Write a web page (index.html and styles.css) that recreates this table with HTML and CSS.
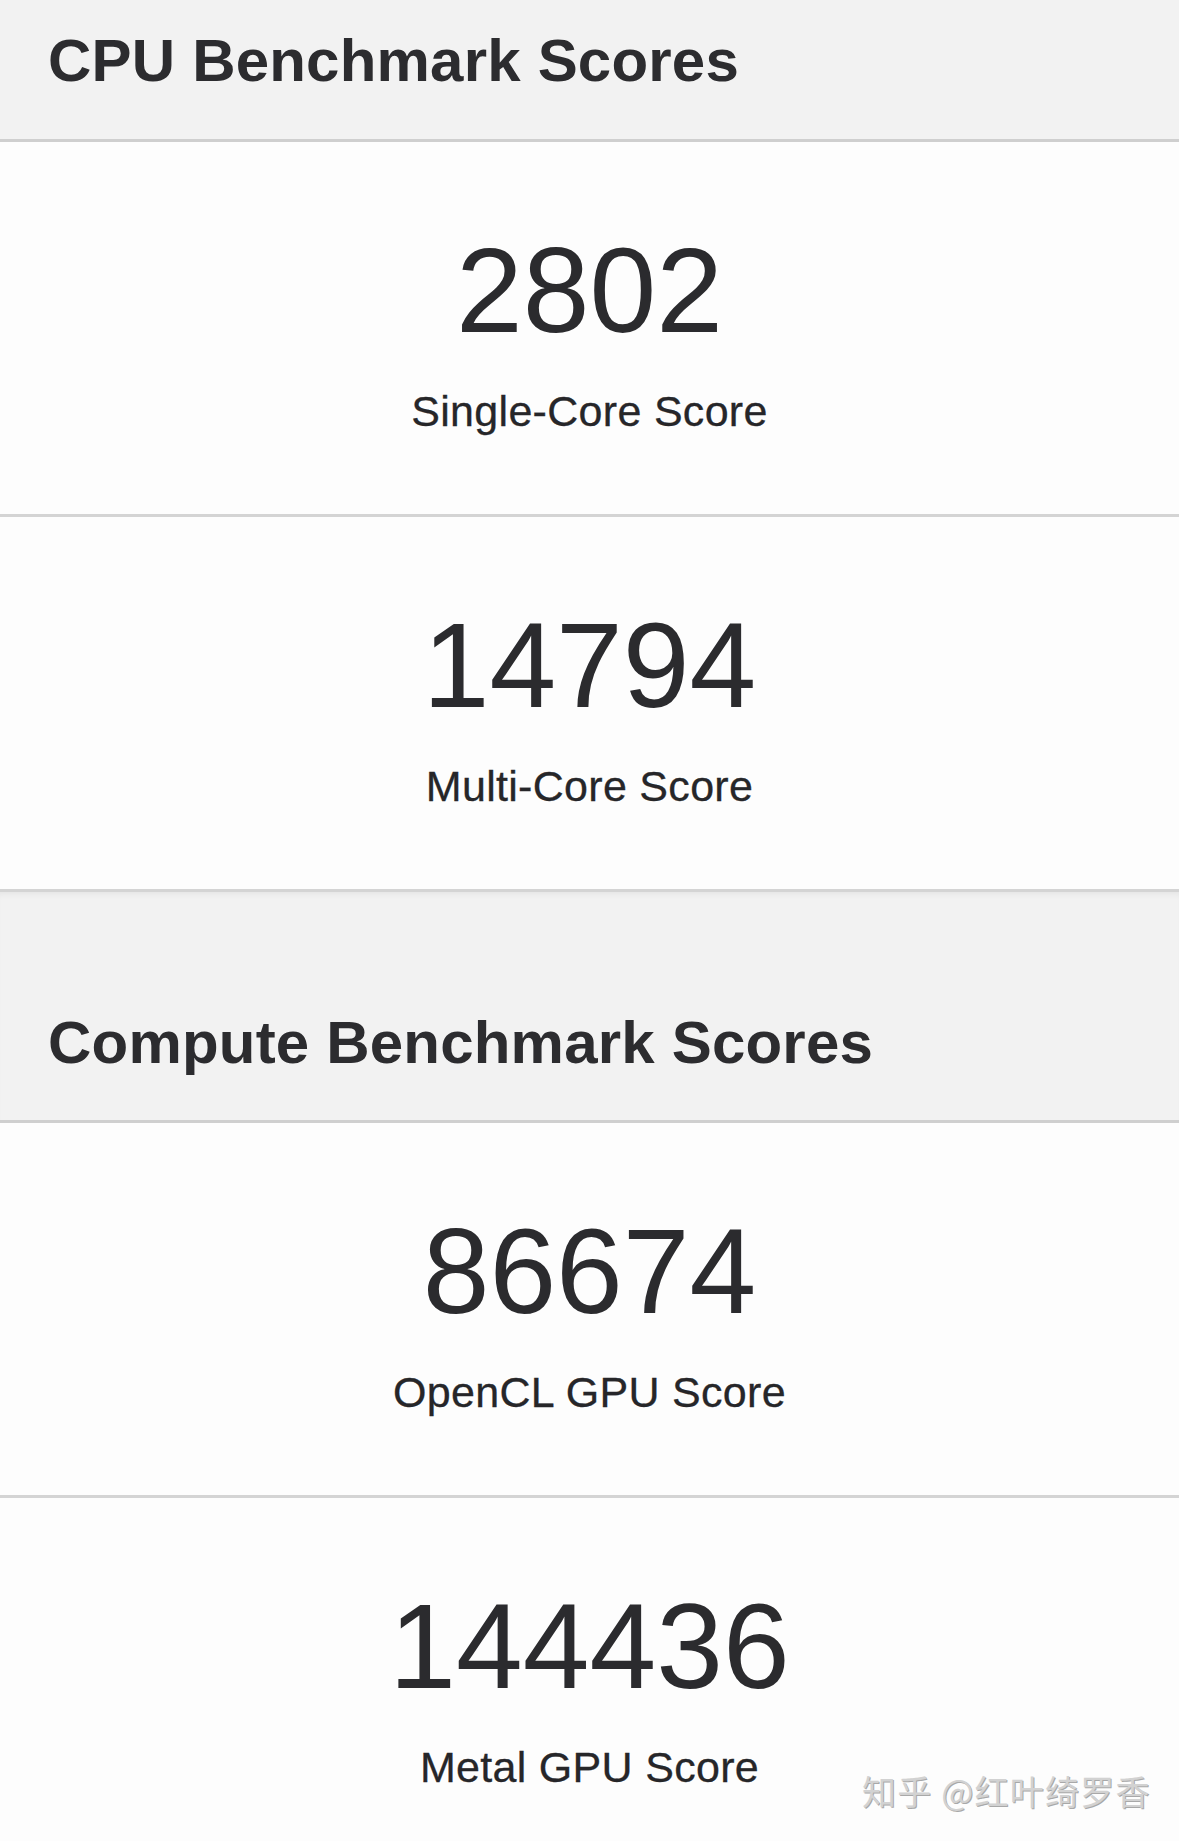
FILE: index.html
```html
<!DOCTYPE html>
<html lang="en">
<head>
<meta charset="utf-8">
<title>Benchmark Scores</title>
<link rel="stylesheet" href="styles.css">
</head>
<body>
<main class="page">
  <section class="group">
    <h2 class="group-title group-title-first">CPU Benchmark Scores</h2>
    <div class="score">
      <div class="score-value">2802</div>
      <div class="score-label">Single-Core Score</div>
    </div>
    <div class="score">
      <div class="score-value">14794</div>
      <div class="score-label">Multi-Core Score</div>
    </div>
  </section>
  <section class="group">
    <h2 class="group-title group-title-second">Compute Benchmark Scores</h2>
    <div class="score">
      <div class="score-value">86674</div>
      <div class="score-label">OpenCL GPU Score</div>
    </div>
    <div class="score score-last">
      <div class="score-value">144436</div>
      <div class="score-label">Metal GPU Score</div>
    </div>
  </section>
  <div class="watermark">知乎 @红叶绮罗香</div>
</main>
</body>
</html>
```
FILE: styles.css
```css
html, body {
  margin: 0;
  padding: 0;
}
body {
  background: #fdfdfd;
  font-family: "Liberation Sans", Arial, Helvetica, sans-serif;
  color: #2c2c2f;
  overflow: hidden;
}
.page {
  position: relative;
  width: 1179px;
  height: 1841px;
  overflow: hidden;
}
.group {
  display: flex;
  flex-direction: column;
}
.group-title {
  margin: 0;
  background: #f2f2f2;
  font-size: 60px;
  line-height: 60px;
  font-weight: 700;
  letter-spacing: 0.2px;
  color: #2c2c2f;
  padding-left: 48px;
  border-bottom: 3px solid #cfcfcf;
}
.group-title-first {
  padding-top: 31px;
  padding-bottom: 48px;
}
.group-title-second {
  padding-top: 121px;
  padding-bottom: 47px;
  box-shadow: inset 0 6px 6px -4px rgba(0, 0, 0, 0.06);
}
.score {
  display: flex;
  flex-direction: column;
  align-items: center;
  gap: 40px;
  padding-top: 88px;
  padding-bottom: 81px;
  border-bottom: 3px solid #d4d4d4;
  background: #fdfdfd;
}
.score-last {
  border-bottom: none;
}
.score-value {
  font-size: 120px;
  line-height: 120px;
  font-weight: 400;
  color: #2b2b2e;
}
.score-label {
  font-size: 43px;
  line-height: 43px;
  font-weight: 400;
  letter-spacing: 0.3px;
  color: #262629;
  -webkit-text-stroke: 0.3px #262629;
}
.watermark {
  position: absolute;
  left: 862px;
  top: 1771px;
  font-family: "Noto Sans CJK SC", "Liberation Sans", sans-serif;
  font-size: 34px;
  line-height: 40px;
  letter-spacing: 1.2px;
  color: #d2d2d2;
  text-shadow: 1px 1px 0 #a8a8a8;
  white-space: nowrap;
}
```
